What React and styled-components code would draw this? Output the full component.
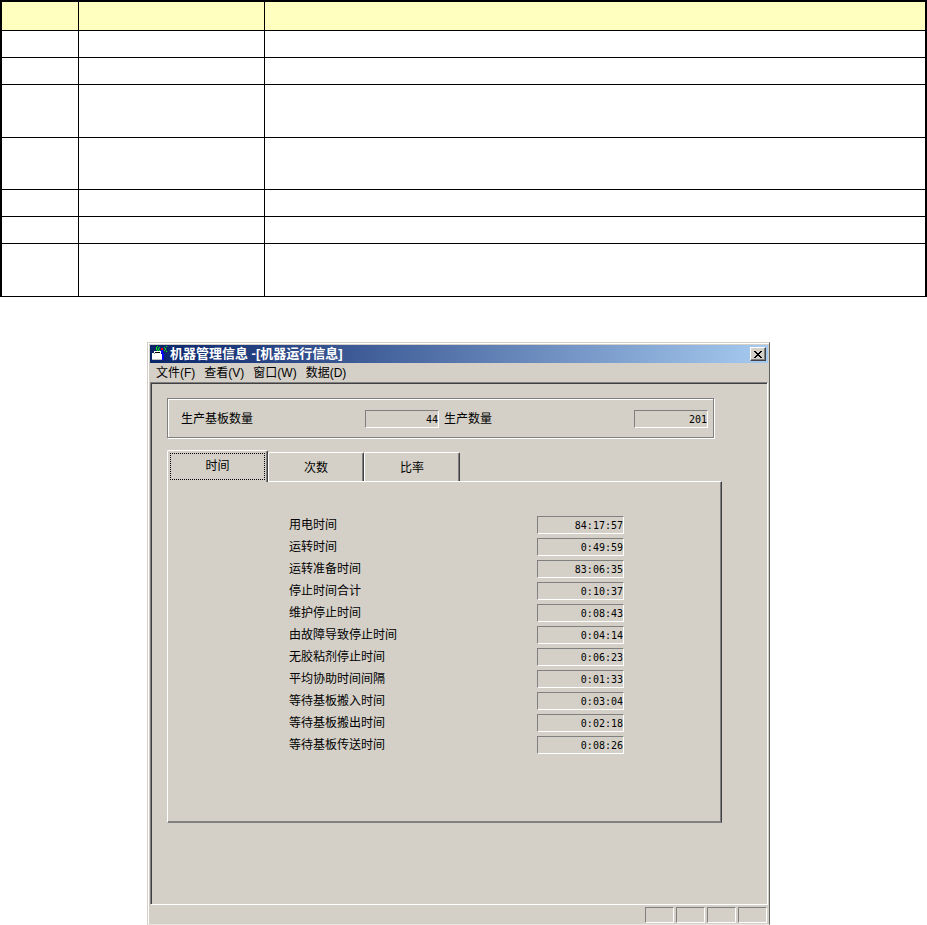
import React, { useState } from "react";
import styled, { createGlobalStyle } from "styled-components";

const GlobalStyle = createGlobalStyle`
  * {
    box-sizing: border-box;
  }
  body {
    margin: 0;
    background: #ffffff;
    color: #000000;
    font-family: "Liberation Sans", "Noto Sans CJK SC", sans-serif;
    font-size: 12px;
    line-height: 16px;
  }
  button,
  input {
    margin: 0;
    padding: 0;
    border: 0;
    border-radius: 0;
    background: none;
    color: inherit;
    font: inherit;
    outline: none;
  }
`;

const tableRows = [27, 27, 53, 52, 27, 27, 53];

const menus = ["文件(F)", "查看(V)", "窗口(W)", "数据(D)"];

const tabs = ["时间", "次数", "比率"];

const times = [
  ["用电时间", "84:17:57"],
  ["运转时间", "0:49:59"],
  ["运转准备时间", "83:06:35"],
  ["停止时间合计", "0:10:37"],
  ["维护停止时间", "0:08:43"],
  ["由故障导致停止时间", "0:04:14"],
  ["无胶粘剂停止时间", "0:06:23"],
  ["平均协助时间间隔", "0:01:33"],
  ["等待基板搬入时间", "0:03:04"],
  ["等待基板搬出时间", "0:02:18"],
  ["等待基板传送时间", "0:08:26"],
];

const MachineIcon = () => (
  <svg width="16" height="16" viewBox="0 0 16 16" shapeRendering="crispEdges">
    <path d="M3 5h7v3h1v6H1V7h2z" fill="#ffffff" />
    <path d="M4 6h5v1H4z" fill="#000000" />
    <path d="M3 7h1v1H3z" fill="#808080" />
    <path d="M1 13h10v1H1z" fill="#c0c0c0" />
    <path d="M10 4h2v3h1v7h-2V8h-1z" fill="#0000ff" />
    <path d="M10 2h2v2h-2z" fill="#ff0000" />
    <path
      d="M6 0h1v1H6zM5 1h1v3H5zM6 4h1v1H6zM8 1h1v1H8zM7 2h1v2H7zM8 4h1v1H8zM13 1h1v1h-1zM14 2h1v2h-1zM13 4h1v1h-1zM15 0h1v1h-1zM15 5h1v1h-1z"
      fill="#00ff00"
    />
  </svg>
);

const CloseIcon = () => (
  <svg width="8" height="7" viewBox="0 0 8 7" shapeRendering="crispEdges">
    <path
      d="M0 0h2v1H0zM6 0h2v1H6zM1 1h2v1H1zM5 1h2v1H5zM2 2h4v1H2zM3 3h2v1H3zM2 4h4v1H2zM1 5h2v1H1zM5 5h2v1H5zM0 6h2v1H0zM6 6h2v1H6z"
      fill="#000000"
    />
  </svg>
);

const App = () => {
  const [activeTab, setActiveTab] = useState(0);

  return (
    <>
      <GlobalStyle />
      <SpecTable>
        <colgroup>
          <Col $width="77px" />
          <Col $width="186px" />
          <Col />
        </colgroup>
        <thead>
          <Row $height={29}>
            <HeadCell />
            <HeadCell />
            <HeadCell />
          </Row>
        </thead>
        <tbody>
          {tableRows.map((height, i) => (
            <Row key={i} $height={height}>
              <Cell />
              <Cell />
              <Cell />
            </Row>
          ))}
        </tbody>
      </SpecTable>

      <Window>
        <TitleBar>
          <MachineIcon />
          <Title>机器管理信息 -[机器运行信息]</Title>
          <CloseButton aria-label="关闭">
            <CloseIcon />
          </CloseButton>
        </TitleBar>
        <MenuBar>
          {menus.map((menu) => (
            <MenuButton key={menu}>{menu}</MenuButton>
          ))}
        </MenuBar>

        <Client>
          <Summary>
            <label htmlFor="boards">生产基板数量</label>
            <Field id="boards" value="44" readOnly />
            <SummaryLabel htmlFor="products">生产数量</SummaryLabel>
            <Field id="products" value="201" readOnly />
          </Summary>

          <TabList role="tablist">
            {tabs.map((tab, i) => (
              <Tab
                key={tab}
                role="tab"
                aria-selected={activeTab === i}
                $active={activeTab === i}
                onClick={() => setActiveTab(i)}
              >
                <TabText $active={activeTab === i}>{tab}</TabText>
              </Tab>
            ))}
          </TabList>
          <TabPanel role="tabpanel">
            {times.map(([label, value], i) => (
              <TimeRow key={label}>
                <label htmlFor={`time-${i}`}>{label}</label>
                <Field id={`time-${i}`} value={value} readOnly />
              </TimeRow>
            ))}
          </TabPanel>
        </Client>

        <StatusBar>
          <StatusCell />
          <StatusCell />
          <StatusCell />
          <StatusCell />
        </StatusBar>
      </Window>
    </>
  );
};

const SpecTable = styled.table`
  width: 100%;
  table-layout: fixed;
  border-collapse: separate;
  border-spacing: 0;
  border: 2px solid #000000;
  border-bottom: 0;
`;

const Col = styled.col`
  width: ${({ $width }) => $width || "auto"};
`;

const Row = styled.tr`
  height: ${({ $height }) => $height}px;
`;

const Cell = styled.td`
  padding: 0;
  border-right: 1px solid #000000;
  border-bottom: 1px solid #000000;
  &:last-child {
    border-right: 0;
  }
`;

const HeadCell = styled(Cell).attrs({ as: "th" })`
  background: #ffffc0;
`;

const Window = styled.main`
  margin: 45px 157px 0 147px;
  padding: 2px 1px 1px 2px;
  background: #d4d0c8;
  border: 1px solid;
  border-color: #d4d0c8 #606060 #e8e6e0 #d4d0c8;
  box-shadow: inset 1px 1px #ffffff;
`;

const TitleBar = styled.header`
  display: flex;
  align-items: center;
  gap: 3px;
  height: 18px;
  padding: 0 2px 0 1px;
  background: linear-gradient(to right, #0a246a, #a6caf0);
`;

const Title = styled.h1`
  flex: 1;
  margin: 0;
  color: #ffffff;
  font-size: 13px;
  font-weight: bold;
  line-height: 18px;
  white-space: nowrap;
`;

const CloseButton = styled.button`
  display: flex;
  align-items: center;
  justify-content: center;
  width: 16px;
  height: 14px;
  background: #d4d0c8;
  border: 1px solid;
  border-color: #ffffff #404040 #404040 #ffffff;
  box-shadow: inset -1px -1px #808080;
`;

const MenuBar = styled.nav`
  display: flex;
  gap: 9px;
  height: 19px;
  padding-left: 6px;
`;

const MenuButton = styled.button`
  line-height: 20px;
  white-space: nowrap;
`;

const Client = styled.section`
  padding: 15px 45px 81px 16px;
  border: 1px solid;
  border-color: #808080 #ffffff #ffffff #808080;
  box-shadow: inset 1px 1px #404040;
`;

const Summary = styled.div`
  display: grid;
  grid-template-columns: 184px 74px 1fr 74px;
  align-items: center;
  height: 40px;
  margin-right: 8px;
  padding: 2px 5px 0 13px;
  border: 1px solid #808080;
  box-shadow: 1px 1px #ffffff, inset 1px 1px #ffffff;
`;

const SummaryLabel = styled.label`
  padding-left: 5px;
`;

const Field = styled.input`
  width: 100%;
  height: 18px;
  border: 1px solid;
  border-color: #808080 #ffffff #ffffff #808080;
  font-family: "DejaVu Sans Mono", monospace;
  font-size: 10px;
  text-align: right;
`;

const TabList = styled.div`
  display: flex;
  align-items: flex-end;
  margin-top: 12px;
`;

const Tab = styled.button`
  position: relative;
  width: ${({ $active }) => ($active ? 101 : 96)}px;
  height: ${({ $active }) => ($active ? 32 : 29)}px;
  margin-bottom: ${({ $active }) => ($active ? -1 : 0)}px;
  padding: 2px;
  background: #d4d0c8;
  border: 1px solid;
  border-color: #ffffff #404040 transparent #ffffff;
  border-bottom: 0;
  border-radius: 2px 2px 0 0;
  box-shadow: inset -1px 0 #808080;
`;

const TabText = styled.span`
  display: block;
  border: 1px dotted ${({ $active }) => ($active ? "#000000" : "transparent")};
  line-height: ${({ $active }) => ($active ? 25 : 24)}px;
`;

const TabPanel = styled.div`
  padding: 32px 0 66px 121px;
  border: 1px solid;
  border-color: #ffffff #404040 #808080 #ffffff;
  box-shadow: inset -1px -1px #808080;
`;

const TimeRow = styled.div`
  display: grid;
  grid-template-columns: 248px 87px;
  align-items: center;
  height: 22px;
`;

const StatusBar = styled.footer`
  display: flex;
  justify-content: flex-end;
  gap: 2px;
  padding: 2px 1px 0 0;
`;

const StatusCell = styled.div`
  width: 29px;
  height: 16px;
  border: 1px solid;
  border-color: #808080 #ffffff #ffffff #808080;
`;

export default App;
